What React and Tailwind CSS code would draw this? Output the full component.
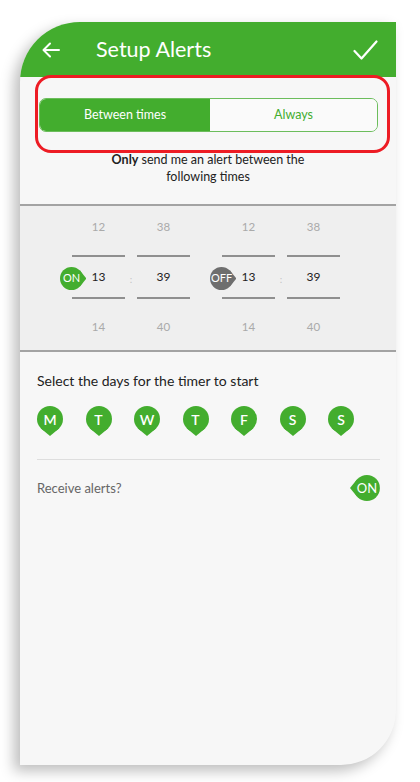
import React from "react";

const GREEN = "#43ad2e";

// pin shaped badge: a circle with one pointed side
function Pin({ label, dir = "down", fill = GREEN, r = 13, textClass = "text-[14px] font-semibold" }) {
  const tip = r * 1.3;
  const s = r * 0.72;
  let w = r * 2;
  let h = r * 2;
  let cx = r;
  let cy = r;
  let pts;
  if (dir === "down") {
    h = r + tip;
    pts = `${cx - s},${cy + s} ${cx},${cy + tip} ${cx + s},${cy + s}`;
  } else if (dir === "right") {
    w = r + tip;
    pts = `${cx + s},${cy - s} ${cx + tip},${cy} ${cx + s},${cy + s}`;
  } else {
    w = r + tip;
    cx = tip;
    pts = `${cx - s},${cy - s} ${cx - tip},${cy} ${cx - s},${cy + s}`;
  }
  return (
    <div className="relative shrink-0" style={{ width: w, height: h }}>
      <svg width={w} height={h} className="absolute inset-0">
        <circle cx={cx} cy={cy} r={r} fill={fill} />
        <polygon points={pts} fill={fill} />
      </svg>
      <span
        className={`absolute flex items-center justify-center text-white ${textClass}`}
        style={{ left: cx - r, top: cy - r, width: r * 2, height: r * 2 }}
      >
        {label}
      </span>
    </div>
  );
}

function Column({ top, mid, bottom }) {
  return (
    <div className="flex w-[53px] flex-col items-stretch">
      <div className="mt-[11px] flex h-[20px] items-center justify-center text-[11.5px] text-[#aaaaaa]">{top}</div>
      <div className="mt-[18px] h-[2px] bg-[#8f8f8f]" />
      <div className="flex h-[40px] items-center justify-center text-[12px] text-[#222]">{mid}</div>
      <div className="h-[2px] bg-[#8f8f8f]" />
      <div className="mt-[18px] flex h-[20px] items-center justify-center text-[11.5px] text-[#aaaaaa]">{bottom}</div>
    </div>
  );
}

function TimeGroup({ on }) {
  return (
    <div className="relative flex">
      <Column top="12" mid="13" bottom="14" />
      <div className="flex w-[12px] items-center justify-center pt-[3px] text-[10px] text-[#c4c4c4]">:</div>
      <Column top="38" mid="39" bottom="40" />
      <div className="absolute left-[-12px] top-[61px]">
        {on ? (
          <Pin label="ON" dir="right" r={11.5} fill={GREEN} textClass="text-[11px]" />
        ) : (
          <Pin label="OFF" dir="right" r={11.5} fill="#6e6e6e" textClass="text-[11px]" />
        )}
      </div>
    </div>
  );
}

export default function App() {
  const days = ["M", "T", "W", "T", "F", "S", "S"];
  return (
    <div className="min-h-[782px] bg-white pl-[20px] pt-[22px]" style={{ fontFamily: 'Lato, "Open Sans", sans-serif' }}>
      <div className="relative flex h-[743px] w-[376px] flex-col overflow-hidden rounded-tl-[60px] rounded-br-[55px] bg-[#f7f7f7] shadow-[-6px_6px_14px_rgba(0,0,0,0.26)]">
        {/* header */}
        <div className="flex h-[55px] shrink-0 items-center bg-[#43ad2e] pl-[22px] pr-[18px] text-white">
          <svg width="18" height="16" viewBox="0 0 18 16" fill="none" stroke="white" strokeWidth="2" strokeLinecap="round" strokeLinejoin="round">
            <path d="M17 8H2M8 1.5L1.5 8 8 14.5" />
          </svg>
          <div className="ml-[36px] flex-1 text-[21.5px] leading-none">Setup Alerts</div>
          <svg width="25" height="20" viewBox="0 0 25 20" fill="none" stroke="white" strokeWidth="2.2" strokeLinecap="round" strokeLinejoin="round">
            <path d="M1.5 11l7 7.5L23.5 1.5" />
          </svg>
        </div>

        {/* mode switch */}
        <div className="relative pl-[19px] pt-[21px]">
          <div className="flex h-[34px] w-[339px] overflow-hidden rounded-[7px] border-[1.5px] border-[#6cbd5c] text-[12.5px]">
            <div className="flex w-[170px] items-center justify-center bg-[#43ad2e] text-white">Between times</div>
            <div className="flex flex-1 items-center justify-center bg-[#fafafa] text-[#43ad2e]">Always</div>
          </div>
          <div className="pointer-events-none absolute left-[15px] top-[-2px] h-[78px] w-[355px] rounded-[16px] border-[3px] border-[#ed1c24]" />
        </div>

        <p className="mt-[19px] text-center text-[12.5px] leading-[17px] text-[#222]">
          <span className="font-bold">Only</span> send me an alert between the
          <br />
          following times
        </p>

        {/* time picker */}
        <div className="mt-[19px] flex h-[148px] shrink-0 border-y-2 border-[#a3a3a3] bg-[#efefef] pl-[52px]">
          <TimeGroup on />
          <div className="w-[32px]" />
          <TimeGroup />
        </div>

        {/* days */}
        <div className="px-[17px]">
          <div className="mt-[20px] text-[14px] leading-[18px] text-[#222]">Select the days for the timer to start</div>
          <div className="mt-[16px] flex gap-[22.5px]">
            {days.map((d, i) => (
              <Pin key={i} label={d} dir="down" />
            ))}
          </div>
          <div className="mt-[23px] h-[1.5px] w-[343px] bg-[#dedede]" />
          <div className="mt-[15px] flex w-[343px] items-center justify-between">
            <span className="text-[13px] text-[#666]">Receive alerts?</span>
            <Pin label="ON" dir="left" r={13} textClass="text-[13px]" />
          </div>
        </div>
      </div>
    </div>
  );
}
